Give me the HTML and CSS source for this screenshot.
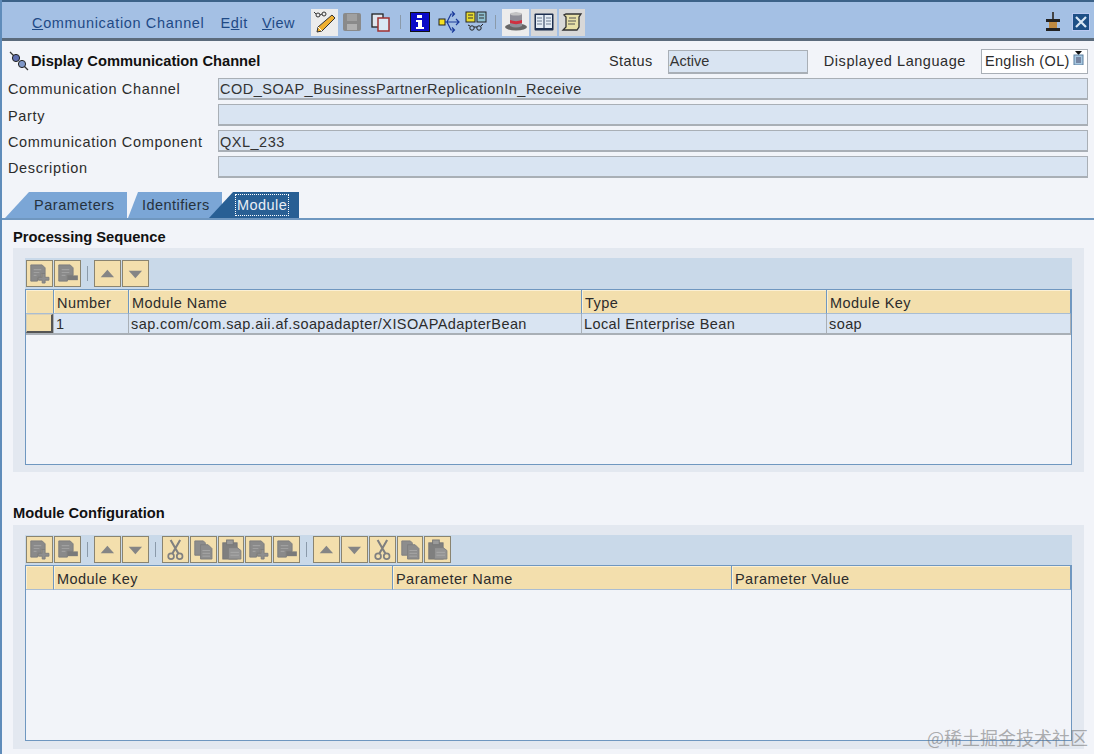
FILE: index.html
```html
<!DOCTYPE html>
<html lang="en">
<head>
    <meta charset="UTF-8">
    <meta name="viewport" content="width=device-width, initial-scale=1.0">
    <title>Display Communication Channel</title>
    <link rel="stylesheet" href="styles.css">
</head>
<body>
    <svg class="icon-defs" width="0" height="0">
        <symbol id="i-add" viewBox="0 0 26 26">
            <path d="M4 4h12l3 3v6h-4v4h-4v4H4z" fill="#8a8a8a" stroke="#7d7d7d"/>
            <path d="M7 9h8M7 12h6M7 15h3" stroke="#a0a0a0" stroke-width="1.2"/>
            <path d="M16 13h3v4h4v3h-4v3h-3v-3h-4v-3h4z" fill="#8f8f8f" stroke="#7d7d7d"/>
        </symbol>
        <symbol id="i-remove" viewBox="0 0 26 26">
            <path d="M4 4h12l3 3v8h-6v6H4z" fill="#8a8a8a" stroke="#7d7d7d"/>
            <path d="M7 9h8M7 12h8M7 15h4" stroke="#a0a0a0" stroke-width="1.2"/>
            <rect x="13" y="15" width="11" height="5" fill="#7a7a7a"/>
        </symbol>
        <symbol id="i-up" viewBox="0 0 26 26"><path d="M6 17l7-8 7 8z" fill="#858585"/></symbol>
        <symbol id="i-down" viewBox="0 0 26 26"><path d="M6 10h14l-7 8z" fill="#858585"/></symbol>
        <symbol id="i-cut" viewBox="0 0 26 26">
            <path d="M8 3l8 14M18 3L10 17" stroke="#808080" stroke-width="2.2" fill="none"/>
            <circle cx="8.5" cy="20" r="3" fill="none" stroke="#808080" stroke-width="1.8"/>
            <circle cx="17.5" cy="20" r="3" fill="none" stroke="#808080" stroke-width="1.8"/>
        </symbol>
        <symbol id="i-copy" viewBox="0 0 26 26">
            <path d="M4 4h9l2 2v13H4z" fill="#8d8d8d" stroke="#808080"/>
            <path d="M10 8h8l4 4v11H10z" fill="#8d8d8d" stroke="#808080"/>
            <path d="M12 14h8M12 17h8M12 20h8" stroke="#a8a8a8"/>
        </symbol>
        <symbol id="i-paste" viewBox="0 0 26 26">
            <rect x="4" y="6" width="15" height="17" fill="#7f7f7f" stroke="#777"/>
            <rect x="8" y="3" width="7" height="5" fill="#9a9a9a" stroke="#777"/>
            <path d="M10 11h9l4 3v9H10z" fill="#949494" stroke="#808080"/>
            <path d="M12 16h9M12 19h9" stroke="#aaa"/>
        </symbol>
    </svg>

    <div class="menubar">
        <nav class="menu">
            <a><u>C</u>ommunication Channel</a>
            <a>E<u>d</u>it</a>
            <a><u>V</u>iew</a>
        </nav>
        <div class="tools">
            <button class="tool tool-on">
                <svg width="24" height="24" viewBox="0 0 24 24">
                    <circle cx="5" cy="5" r="2" fill="none" stroke="#333"/><circle cx="11" cy="4" r="2" fill="none" stroke="#333"/>
                    <path d="M7 5l2-1M3 4L1 2" stroke="#333"/>
                    <path d="M19 5l3 3L9 21l-5 1 1-5z" fill="#f0b030" stroke="#333"/>
                    <path d="M5 17l4 4" stroke="#fff"/>
                </svg>
            </button>
            <button class="tool tool-plain tool-off">
                <svg width="20" height="20" viewBox="0 0 20 20">
                    <rect x="1" y="1" width="18" height="18" rx="2" fill="#8a8a8a"/>
                    <rect x="5" y="2" width="10" height="7" fill="#a0a0a0"/><rect x="5" y="12" width="10" height="6" fill="#b0b0b0"/>
                </svg>
            </button>
            <button class="tool tool-plain tool-copy">
                <svg width="20" height="20" viewBox="0 0 20 20">
                    <rect x="1" y="2" width="11" height="13" fill="#dfe5ee" stroke="#222" stroke-width="1.3"/>
                    <rect x="7" y="6" width="11" height="13" fill="#d9e8f5" stroke="#a03030" stroke-width="1.5"/>
                </svg>
            </button>
            <span class="sep sep-menu"></span>
            <button class="tool tool-plain tool-info">
                <svg width="20" height="20" viewBox="0 0 20 20">
                    <rect x="0.5" y="0.5" width="19" height="19" fill="#0a0ac8" stroke="#111"/>
                    <path d="M7 3h5v3H7zM6 8h6v7h2v2H6v-2h2v-5H6z" fill="#fff"/>
                </svg>
            </button>
            <button class="tool tool-plain tool-where">
                <svg width="22" height="22" viewBox="0 0 22 22">
                    <rect x="1" y="8" width="6" height="6" fill="#f5e020" stroke="#222"/>
                    <path d="M7 11h14M18 8l3 3-3 3M9 11l4-8h3M9 11l4 8h3M14 0.500l2.500 2.500-2.500 2.500M14 16.500l2.500 2.500-2.500 2.500" fill="none" stroke="#1a3a9a" stroke-width="1.2"/>
                </svg>
            </button>
            <button class="tool tool-plain tool-compare">
                <svg width="22" height="22" viewBox="0 0 22 22">
                    <rect x="1" y="1" width="9" height="10" fill="#e8dc30" stroke="#222"/>
                    <rect x="12" y="1" width="9" height="10" fill="#8fc0d0" stroke="#222"/>
                    <path d="M3 4h5M3 7h5M14 4h5M14 7h5" stroke="#333"/>
                    <circle cx="7" cy="17" r="2.2" fill="none" stroke="#222"/><circle cx="14" cy="17" r="2.2" fill="none" stroke="#222"/>
                    <path d="M9 16l3 0M5 15l-2-1M16 15l2-2" stroke="#222"/>
                </svg>
            </button>
            <span class="sep sep-menu sep-wide"></span>
            <button class="tool tool-on tool-hat">
                <svg width="24" height="22" viewBox="0 0 24 22">
                    <ellipse cx="12" cy="16" rx="11" ry="3.500" fill="#666"/>
                    <path d="M6 3c4-2 8-2 12 0v12c-4 2-8 2-12 0z" fill="#8f8f98"/>
                    <path d="M6 9c4 1.500 8 1.500 12 0v3c-4 1.500-8 1.500-12 0z" fill="#d03040"/>
                    <ellipse cx="12" cy="3" rx="6" ry="1.600" fill="#c4c4c4"/>
                </svg>
            </button>
            <button class="tool tool-grey">
                <svg width="20" height="18" viewBox="0 0 20 18">
                    <rect x="0.500" y="0.500" width="19" height="17" rx="1" fill="#1d2f4f"/>
                    <rect x="2" y="2" width="7.500" height="13" fill="#e4ecf4"/><rect x="10.500" y="2" width="7.500" height="13" fill="#e4ecf4"/>
                    <path d="M3 5h5M3 8h5M3 11h5M12 5h5M12 8h5M12 11h5" stroke="#6a7a90"/>
                </svg>
            </button>
            <button class="tool tool-grey">
                <svg width="22" height="20" viewBox="0 0 22 20">
                    <path d="M5 2h15l-2 3v10l-2 3H2l3-3V5L3 3z" fill="#e8e0a8" stroke="#333" stroke-width="1.300"/>
                    <path d="M8 6h7M7 9h8M7 12h7" stroke="#555"/>
                </svg>
            </button>
        </div>
        <div class="bar-right">
            <svg width="16" height="22" viewBox="0 0 16 22">
                <path d="M7 1h2v7H7z" fill="#444"/>
                <rect x="1" y="8" width="14" height="3" fill="#222"/>
                <rect x="4" y="11" width="8" height="6" fill="#c08a40"/>
                <rect x="1" y="17" width="14" height="3" fill="#222"/>
            </svg>
            <span class="close-box">
                <svg width="12" height="12" viewBox="0 0 12 12"><path d="M1 1l10 10M11 1L1 11" stroke="#d8e6f4" stroke-width="2.200"/></svg>
            </span>
        </div>
    </div>

    <main class="page">
        <div class="title-row">
            <svg class="title-icon" width="20" height="20" viewBox="0 0 20 20">
                <path d="M1 1l5 5M14 14l5 5" stroke="#333" stroke-width="1.300"/>
                <circle cx="7" cy="7" r="3.600" fill="#6070b0" stroke="#222"/>
                <circle cx="13" cy="13" r="3.600" fill="#8098c8" stroke="#222"/>
            </svg>
            <h1 class="title">Display Communication Channel</h1>
            <span class="lbl lbl-status">Status</span>
            <span class="field field-status">Active</span>
            <span class="lbl lbl-lang">Displayed Language</span>
            <span class="lang">English (OL)
                <svg class="lang-icon" width="11" height="14" viewBox="0 0 11 14">
                    <path d="M2 0h7L5.500 4z" fill="#111"/>
                    <rect x="1" y="4" width="9" height="10" fill="#a8c8e0" stroke="#5a7fa0"/>
                    <path d="M3 7h5M3 9h5M3 11h5" stroke="#446"/>
                </svg>
            </span>
        </div>

        <div class="form-row"><label class="lbl">Communication Channel</label><span class="field">COD_SOAP_BusinessPartnerReplicationIn_Receive</span></div>
        <div class="form-row"><label class="lbl">Party</label><span class="field"></span></div>
        <div class="form-row"><label class="lbl">Communication Component</label><span class="field">QXL_233</span></div>
        <div class="form-row"><label class="lbl">Description</label><span class="field"></span></div>

        <div class="tabs">
            <div class="tab tab-params">Parameters</div>
            <div class="tab tab-ids">Identifiers</div>
            <div class="tab tab-module"><span class="tab-focus">Module</span></div>
        </div>

        <section class="tab-panel">
            <h2 class="sec-title">Processing Sequence</h2>
            <div class="group">
                <div class="toolbar">
                    <button class="tb"><svg><use href="#i-add"/></svg></button>
                    <button class="tb"><svg><use href="#i-remove"/></svg></button>
                    <span class="sep"></span>
                    <button class="tb"><svg><use href="#i-up"/></svg></button>
                    <button class="tb"><svg><use href="#i-down"/></svg></button>
                </div>
                <div class="table">
                    <div class="thead cols-seq">
                        <div class="th"></div><div class="th">Number</div><div class="th">Module Name</div><div class="th">Type</div><div class="th">Module Key</div>
                    </div>
                    <div class="tr cols-seq">
                        <div class="td-head"><span class="row-btn"></span></div><div class="td">1</div><div class="td">sap.com/com.sap.aii.af.soapadapter/XISOAPAdapterBean</div><div class="td">Local Enterprise Bean</div><div class="td">soap</div>
                    </div>
                </div>
            </div>

            <h2 class="sec-title sec-config">Module Configuration</h2>
            <div class="group">
                <div class="toolbar toolbar-config">
                    <button class="tb"><svg><use href="#i-add"/></svg></button>
                    <button class="tb"><svg><use href="#i-remove"/></svg></button>
                    <span class="sep"></span>
                    <button class="tb"><svg><use href="#i-up"/></svg></button>
                    <button class="tb"><svg><use href="#i-down"/></svg></button>
                    <span class="sep"></span>
                    <button class="tb"><svg><use href="#i-cut"/></svg></button>
                    <button class="tb"><svg><use href="#i-copy"/></svg></button>
                    <button class="tb"><svg><use href="#i-paste"/></svg></button>
                    <button class="tb"><svg><use href="#i-add"/></svg></button>
                    <button class="tb"><svg><use href="#i-remove"/></svg></button>
                    <span class="sep"></span>
                    <button class="tb"><svg><use href="#i-up"/></svg></button>
                    <button class="tb"><svg><use href="#i-down"/></svg></button>
                    <button class="tb"><svg><use href="#i-cut"/></svg></button>
                    <button class="tb"><svg><use href="#i-copy"/></svg></button>
                    <button class="tb"><svg><use href="#i-paste"/></svg></button>
                </div>
                <div class="table">
                    <div class="thead cols-conf">
                        <div class="th"></div><div class="th">Module Key</div><div class="th">Parameter Name</div><div class="th">Parameter Value</div>
                    </div>
                </div>
            </div>
        </section>
    </main>

    <div class="watermark">@稀土掘金技术社区</div>
</body>
</html>
```

FILE: styles.css
```css
* {
    box-sizing: border-box;
}
html, body {
    height: 100%;
}
body {
    margin: 0;
    overflow: hidden;
    position: relative;
    background-color: #f2f4f9;
    color: #2c2c2c;
    font-family: "Liberation Sans", Arial, sans-serif;
    font-size: 14.5px;
    letter-spacing: 0.45px;
    border-left: 2px solid #5f8cba;
}
.icon-defs {
    position: absolute;
}

/* top bar */
.menubar {
    display: flex;
    align-items: center;
    height: 41px;
    padding: 6px 4px 2px 32px;
    background-color: #a4c0e4;
    border-top: 2px solid #3c6288;
    border-bottom: 3px solid #5b6b7c;
    margin-left: -2px;
}
.menu {
    display: flex;
    gap: 16px;
    width: 279px;
    margin-top: 1px;
    color: #1f4a86;
    letter-spacing: 0.65px;
}
.menu a:last-child {
    margin-left: -2px;
    letter-spacing: 0.4px;
}
.tools {
    display: flex;
    align-items: center;
}
.tool {
    display: flex;
    align-items: center;
    justify-content: center;
    width: 27px;
    height: 27px;
    padding: 0;
    border: 0;
    background: none;
}
.tool-on {
    background-color: #ececec;
}
.tool-grey {
    width: 26px;
    background-color: #d8d8d8;
    margin-left: 2px;
}
.tool-plain {
    width: 20px;
}
.tool-off {
    margin-left: 4px;
}
.tool-copy {
    margin-left: 9px;
}
.tool-where {
    width: 22px;
    margin-left: 8px;
}
.tool-compare {
    width: 22px;
    margin-left: 5px;
}
.sep-menu {
    margin: 0 9px;
}
.sep-wide {
    margin: 0 6px 0 8px;
}
.sep {
    display: block;
    flex: none;
    width: 1px;
    height: 14px;
    background-color: #8a9aaa;
}
.bar-right {
    display: flex;
    align-items: center;
    gap: 11px;
    margin-left: auto;
}
.close-box {
    display: flex;
    align-items: center;
    justify-content: center;
    width: 18px;
    height: 18px;
    background-color: #1d4f86;
    border: 1px solid #b9c8f0;
}

/* header form */
.page {
    display: flex;
    flex-direction: column;
}
.title-row {
    display: flex;
    align-items: center;
    height: 32px;
    padding: 8px 6px 0 7px;
    margin-bottom: 5px;
}
.title-icon {
    margin-right: 2px;
}
.title {
    width: 578px;
    margin: 0;
    font-size: 14.7px;
    font-weight: bold;
    letter-spacing: 0;
    color: #111;
}
.lbl {
    flex: none;
    width: 216px;
    padding-left: 6px;
    letter-spacing: 0.65px;
}
.title-row .lbl {
    width: auto;
    padding: 0;
    letter-spacing: 0.45px;
}
.field {
    display: flex;
    align-items: center;
    flex: 1;
    height: 22px;
    padding-left: 1px;
    background-color: #d9e4f2;
    border: 1px solid #a9afb6;
    border-bottom-width: 2px;
    color: #333;
    letter-spacing: 0.5px;
}
.field-status {
    flex: none;
    width: 140px;
    height: 24px;
    margin: 2px 0 0 15px;
    padding-bottom: 2px;
    letter-spacing: 0;
}
.title-row .lbl-lang {
    margin-left: 16px;
    letter-spacing: 0.55px;
}
.lang {
    display: flex;
    align-items: center;
    justify-content: space-between;
    width: 107px;
    height: 25px;
    margin-left: 15px;
    padding: 0 3px;
    background-color: #fff;
    border: 1px solid #a9afb6;
    letter-spacing: 0.35px;
}
.lang-icon {
    margin-top: -6px;
}
.form-row {
    display: flex;
    align-items: center;
    height: 22px;
    margin-bottom: 4px;
    padding-right: 6px;
}
.form-row + .form-row .lbl,
.form-row + .form-row .field {
    padding-top: 2px;
}

/* tabs */
.tabs {
    display: flex;
    height: 26px;
    margin-top: 10px;
    padding-left: 3px;
}
.tab {
    display: flex;
    align-items: center;
    height: 26px;
    background-color: #7ba6d6;
    color: #26323e;
}
.tab-params {
    width: 122px;
    padding-left: 29px;
    letter-spacing: 0.55px;
    clip-path: polygon(0 100%, 24px 0, 100% 0, 100% 100%);
}
.tab-ids {
    width: 94px;
    margin-left: 1px;
    padding-left: 14px;
    clip-path: polygon(0 100%, 10px 0, 100% 0, 100% 100%);
}
.tab-module {
    width: 90px;
    margin-left: -13px;
    padding-left: 26px;
    background-color: #285f94;
    color: #e8eef6;
    clip-path: polygon(0 100%, 24px 0, 100% 0, 100% 100%);
}
.tab-focus {
    padding: 2px 1px;
    border: 1px dotted #fff;
}

/* panel under the tabs */
.tab-panel {
    padding: 8px 10px 0 13px;
    border-top: 2px solid #6f97c0;
    margin-left: -2px;
}
.sec-title {
    margin: 0 0 2px;
    height: 18px;
    line-height: 19px;
    font-size: 14.7px;
    font-weight: bold;
    letter-spacing: 0;
    color: #111;
}
.sec-config {
    margin: 32px 0 3px;
}
.group {
    width: 1071px;
    height: 224px;
    padding: 10px 12px 7px;
    background-color: #e3e8f0;
}
.toolbar {
    display: flex;
    align-items: flex-start;
    gap: 1px;
    height: 31px;
    padding: 2px 0 0 1px;
    background-color: #c9d9e9;
}
.toolbar-config {
    height: 30px;
    padding-top: 1px;
}
.toolbar .sep {
    margin: 6px 5.25px 0;
    height: 15px;
}
.tb {
    display: block;
    flex: none;
    width: 26.75px;
    height: 27px;
    padding: 0;
    background-color: #f3dfad;
    border: 1px solid #8a8470;
}
.tb svg {
    display: block;
    width: 100%;
    height: 100%;
}
.table {
    height: 176px;
    background-color: #f2f4f9;
    border: 1px solid #6f97c0;
}
.thead, .tr {
    display: grid;
}
.cols-seq {
    grid-template-columns: 28px 75px 453px 245px 1fr;
}
.cols-conf {
    grid-template-columns: 28px 339px 339px 1fr;
}
.th {
    display: flex;
    align-items: center;
    height: 24px;
    padding: 3px 0 0 3px;
    background-color: #f3dfad;
    border-right: 1px solid #6f97c0;
    border-bottom: 1px solid #a9bdd2;
    box-shadow: inset 1px 1px 0 #fbf0d4;
}
.tr {
    height: 21px;
    background-color: #d9e4f2;
    border-bottom: 2px solid #a9afb6;
}
.td {
    padding-left: 2px;
    line-height: 20px;
    border-right: 1px solid #a9afb6;
    white-space: nowrap;
    letter-spacing: 0.41px;
}
.td-head {
    border-right: 1px solid #a9afb6;
}
.row-btn {
    display: block;
    width: 27px;
    height: 19px;
    background-color: #f3dfad;
    border: 1px solid #d8d0b8;
    border-right: 2px solid #555;
    border-bottom: 2px solid #555;
}

.watermark {
    position: absolute;
    right: 6px;
    bottom: 5px;
    font-family: "Noto Sans CJK SC", sans-serif;
    font-size: 18px;
    letter-spacing: 0;
    line-height: 24px;
    color: rgba(110, 110, 110, 0.55);
}
```
